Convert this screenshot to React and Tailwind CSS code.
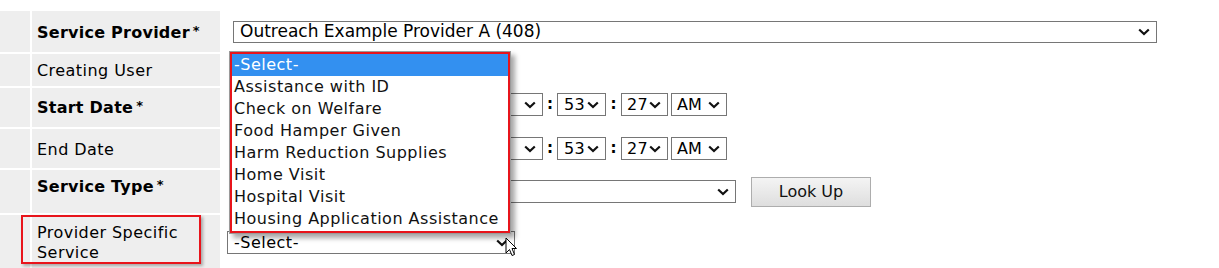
import React from "react";

const font = { fontFamily: '"DejaVu Sans", Verdana, sans-serif' };

function Chevron() {
  return (
    <svg width="12" height="8" viewBox="0 0 12 8" className="shrink-0">
      <path d="M1.2 1.5 L6 6 L10.8 1.5" fill="none" stroke="#111" strokeWidth="2.2" />
    </svg>
  );
}

function FakeSelect({ value, className = "", textClass = "" }) {
  return (
    <div
      className={`flex items-center justify-between border border-[#767676] bg-white pl-[6px] pr-[6px] text-[16px] leading-none text-black ${className}`}
    >
      <span className={textClass}>{value}</span>
      <Chevron />
    </div>
  );
}

function Colon({ w }) {
  return <span className={`${w} text-center text-[15px] font-bold text-black`}>:</span>;
}

function TimeRow() {
  return (
    <div className="flex items-center">
      <div className="ml-[11px] h-[23px] w-[200px] border border-[#767676] bg-white" />
      <FakeSelect value="10" className="ml-[46px] h-[23px] w-[64px]" />
      <Colon w="w-[14px]" />
      <FakeSelect value="53" className="h-[23px] w-[49px]" textClass="tracking-[0.3px]" />
      <Colon w="w-[15px]" />
      <FakeSelect value="27" className="h-[23px] w-[47px]" textClass="-ml-[1px] tracking-[0.3px]" />
      <FakeSelect value="AM" className="ml-[3px] h-[23px] w-[56px]" textClass="-ml-[1px]" />
    </div>
  );
}

function Req() {
  return <span className="ml-[3px] align-[3px] text-[13px] font-bold tracking-normal">*</span>;
}

const rows = [
  {
    h: "h-[41px]",
    label: (
      <span className="font-bold tracking-[0.25px]">
        Service Provider<Req />
      </span>
    ),
    lc: "pt-[3px]",
    content: (
      <FakeSelect
        value="Outreach Example Provider A (408)"
        className="ml-[11px] h-[22px] w-[924px]"
        textClass="text-[17px]"
      />
    ),
  },
  { h: "h-[32px]", label: <span>Creating User</span>, lc: "pt-[2px]", content: null },
  {
    h: "h-[39px]",
    label: (
      <span className="font-bold tracking-[0.25px]">
        Start Date<Req />
      </span>
    ),
    lc: "pt-[1px]",
    content: <div className="-mt-[6px]"><TimeRow /></div>,
  },
  { h: "h-[39px]", label: <span>End Date</span>, lc: "pt-[3px]", content: <TimeRow /> },
  {
    h: "h-[43px]",
    label: (
      <span className="font-bold tracking-[0.25px]">
        Service Type<Req />
      </span>
    ),
    lc: "pb-[9px]",
    content: (
      <div className="flex items-center">
        <FakeSelect value="" className="ml-[11px] h-[23px] w-[503px]" />
        <button className="ml-[15px] h-[30px] w-[120px] border border-[#adadad] bg-gradient-to-b from-[#f4f4f4] to-[#dedede] text-[16px] text-[#111]">
          Look Up
        </button>
      </div>
    ),
  },
  {
    h: "h-[55px]",
    label: (
      <span className="leading-[20px]">
        Provider Specific
        <br />
        Service
      </span>
    ),
    lc: "",
    content: (
      <FakeSelect value="-Select-" className="ml-[5px] h-[23px] w-[288px]" textClass="tracking-[0.5px]" />
    ),
  },
];

const options = [
  "Assistance with ID",
  "Check on Welfare",
  "Food Hamper Given",
  "Harm Reduction Supplies",
  "Home Visit",
  "Hospital Visit",
  "Housing Application Assistance",
];

export default function App() {
  return (
    <div className="relative h-[268px] w-[1219px] overflow-hidden bg-white pt-[11px] text-black" style={font}>
      <div className="flex flex-col gap-[2px]">
        {rows.map((r, i) => (
          <div key={i} className={`grid grid-cols-[30px_188px_1fr] gap-x-[2px] ${r.h}`}>
            <div className="bg-[#eeeeee]" />
            <div className={`flex items-center bg-[#eeeeee] pl-[5px] text-[16px] tracking-[0.45px] ${r.lc}`}>
              {r.label}
            </div>
            <div className="flex items-center">{r.content}</div>
          </div>
        ))}
      </div>

      {/* annotation box */}
      <div className="absolute left-[21px] top-[215px] h-[49px] w-[180px] border-2 border-[#e8141b] shadow-[2px_2px_3px_rgba(0,0,0,0.3)]" />

      {/* open dropdown list */}
      <div className="absolute left-[229px] top-[51px] w-[282px] border border-[#9a9a9a] bg-white shadow-[4px_4px_5px_rgba(0,0,0,0.35)]">
        <div className="border-2 border-[#e8141b] pb-[1px] text-[16px] leading-[22px] tracking-[0.5px]">
          <div className="bg-[#3390f0] pl-[2px] text-white">-Select-</div>
          {options.map((o) => (
            <div key={o} className="pl-[2px] text-[#111]">
              {o}
            </div>
          ))}
        </div>
      </div>

      {/* mouse cursor */}
      <svg className="absolute left-[505px] top-[237px]" width="13" height="21" viewBox="0 0 13 21">
        <path d="M1 1 L1 16 L4.5 12.5 L7 18.5 L9.5 17.5 L7 11.5 L11.5 11.5 Z" fill="#fff" stroke="#000" strokeWidth="1" strokeLinejoin="round" />
      </svg>
    </div>
  );
}
